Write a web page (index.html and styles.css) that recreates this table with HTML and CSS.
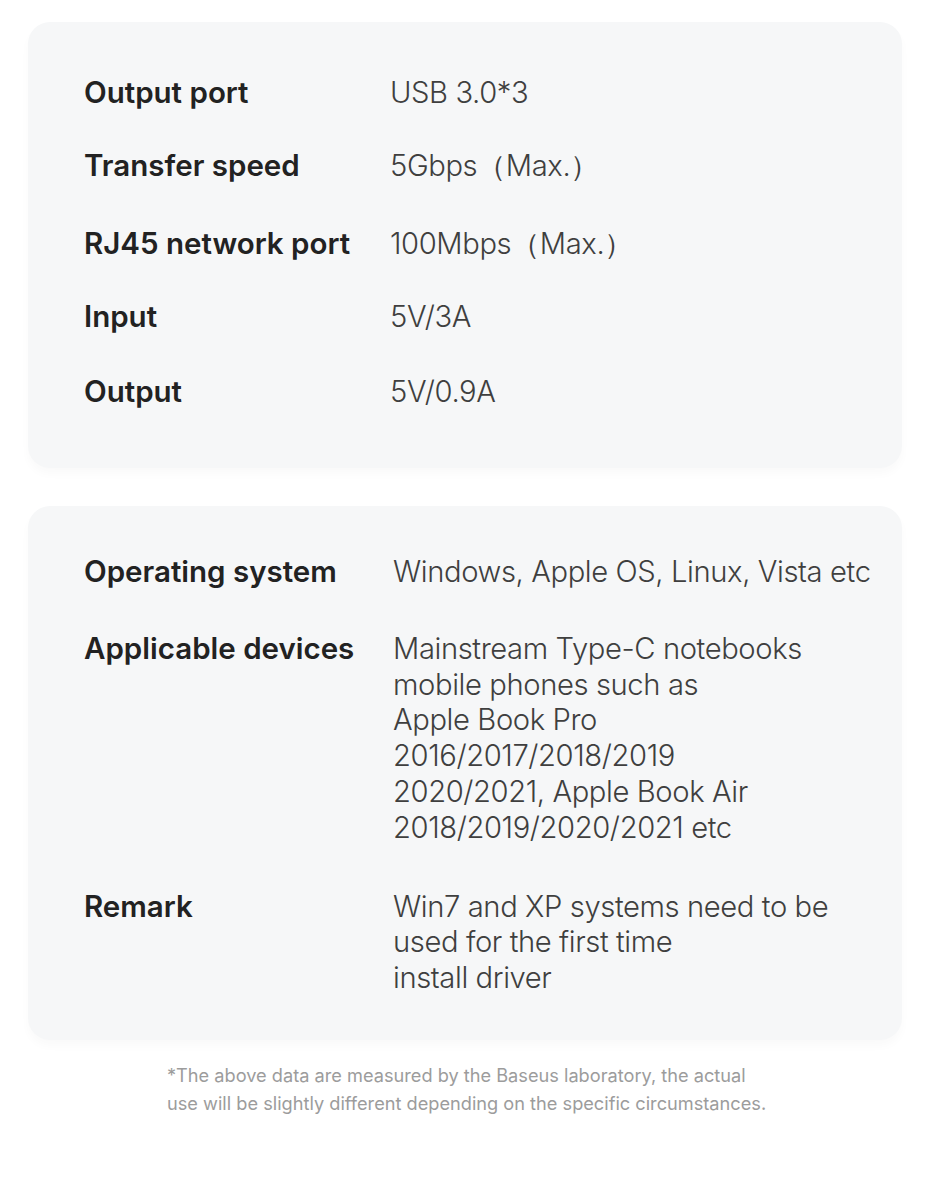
FILE: index.html
```html
<!DOCTYPE html>
<html>
<head>
<meta charset="utf-8">
<link rel="stylesheet" href="styles.css">
</head>
<body>
<div class="page">
  <section class="card card-top">
    <div class="row r1"><div class="label">Output port</div><div class="value">USB 3.0*3</div></div>
    <div class="row r2"><div class="label">Transfer speed</div><div class="value">5Gbps（Max.）</div></div>
    <div class="row r3"><div class="label">RJ45 network port</div><div class="value">100Mbps（Max.）</div></div>
    <div class="row r4"><div class="label">Input</div><div class="value">5V/3A</div></div>
    <div class="row r5"><div class="label">Output</div><div class="value">5V/0.9A</div></div>
  </section>
  <section class="card card-bottom">
    <div class="row2 s1"><div class="label">Operating system</div><div class="value">Windows, Apple OS, Linux, Vista etc</div></div>
    <div class="row2 s2"><div class="label">Applicable devices</div><div class="value multi">Mainstream Type-C notebooks<br>mobile phones such as<br>Apple Book Pro<br>2016/2017/2018/2019<br>2020/2021, Apple Book Air<br>2018/2019/2020/2021 etc</div></div>
    <div class="row2 s3"><div class="label">Remark</div><div class="value multi">Win7 and XP systems need to be<br>used for the first time<br>install driver</div></div>
  </section>
  <p class="note">*The above data are measured by the Baseus laboratory, the actual<br>use will be slightly different depending on the specific circumstances.</p>
</div>
</body>
</html>
```
FILE: styles.css
```css
html, body {
  margin: 0;
  padding: 0;
  background: #ffffff;
}
body {
  width: 930px;
  height: 1204px;
  overflow: hidden;
  font-family: Inter, "Noto Sans", sans-serif;
}
.page {
  padding: 22px 28px 0 28px;
}
.card {
  background: #f6f7f8;
  border-radius: 22px;
  box-shadow: 0 6px 10px rgba(0, 0, 0, 0.025);
}
.card-top {
  height: 446px;
  box-sizing: border-box;
  padding-top: 52px;
}
.card-bottom {
  margin-top: 38px;
  height: 534px;
  box-sizing: border-box;
  padding-top: 47px;
}
.row, .row2 {
  display: flex;
  align-items: baseline;
  padding-left: 56px;
}
.label {
  width: 306px;
  flex: none;
  font-weight: 600;
  font-size: 29.5px;
  color: #222222;
  letter-spacing: 0;
  line-height: 36px;
}
.value {
  font-weight: 300;
  font-size: 29.2px;
  color: #3f3f3f;
  line-height: 35.8px;
  letter-spacing: -0.4px;
}
.row { height: 36px; }
.r2 { margin-top: 37px; }
.r3 { margin-top: 42px; }
.r4 { margin-top: 37px; }
.r5 { margin-top: 39px; }
.row2 .value { padding-left: 3px; }
.s2 { margin-top: 40px; }
.s3 { margin-top: 42px; }
.note {
  margin: 21px 0 0 139px;
  font-size: 18.2px;
  line-height: 28px;
  color: #9c9c9c;
  font-weight: 400;
  letter-spacing: 0;
}
```
